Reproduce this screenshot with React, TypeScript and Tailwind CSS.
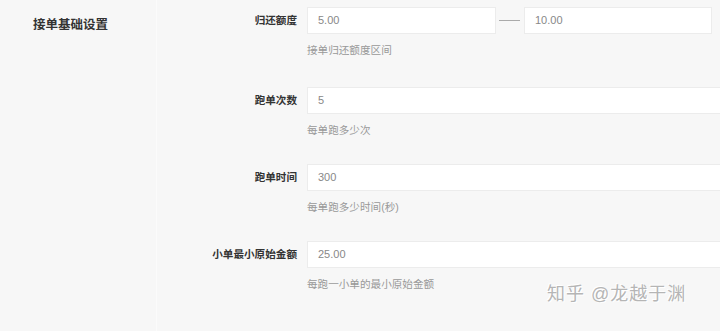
import React from 'react';

const rows = [
  { label: '跑单次数', value: '5', help: '每单跑多少次' },
  { label: '跑单时间', value: '300', help: '每单跑多少时间(秒)' },
  { label: '小单最小原始金额', value: '25.00', help: '每跑一小单的最小原始金额' },
];

const font = { fontFamily: '"Liberation Sans", "Noto Sans CJK SC", sans-serif' };

const Input = ({ value, className }: { value: string; className: string }) => (
  <div className={`h-[27px] bg-white border border-[#ececec] flex items-center pl-[10px] text-[11px] text-[#888] ${className}`}>
    {value}
  </div>
);

export default function App() {
  return (
    <div className="w-[720px] h-[331px] overflow-hidden bg-[#f7f7f7] flex" style={font}>
      <div className="w-[157px] shrink-0 border-r border-[#fbfbfb] pl-[33px] pt-[16px]">
        <div className="text-[12.5px] font-bold text-[#333]">接单基础设置</div>
      </div>
      <div className="flex-1 pt-[7px]">
        <div className="flex h-[80px]">
          <div className="w-[150px] shrink-0 pr-[10px] h-[27px] flex items-center justify-end text-[10.6px] font-bold text-[#333]">
            归还额度
          </div>
          <div className="flex flex-col">
            <div className="flex items-center">
              <Input value="5.00" className="w-[189px]" />
              <div className="w-[21px] h-px bg-[#aaa] ml-[3px] mr-[4px]" />
              <Input value="10.00" className="w-[188px]" />
            </div>
            <div className="mt-[8px] text-[10.6px] text-[#999] leading-[16px]">接单归还额度区间</div>
          </div>
        </div>
        {rows.map((r, i) => (
          <div key={i} className="flex h-[77px]">
            <div className="w-[150px] shrink-0 pr-[10px] h-[27px] flex items-center justify-end text-[10.6px] font-bold text-[#333]">
              {r.label}
            </div>
            <div className="flex flex-col">
              <Input value={r.value} className="w-[430px]" />
              <div className="mt-[8px] text-[10.6px] text-[#999] leading-[16px]">{r.help}</div>
            </div>
          </div>
        ))}
      </div>
      <div
        className="absolute left-[547px] top-[281px] text-[18px] text-[#b5b5b5] tracking-[1px]"
        style={{ textShadow: '1px 1px 0 #fff, -1px -1px 0 #fff' }}
      >
        知乎 @龙越于渊
      </div>
    </div>
  );
}
